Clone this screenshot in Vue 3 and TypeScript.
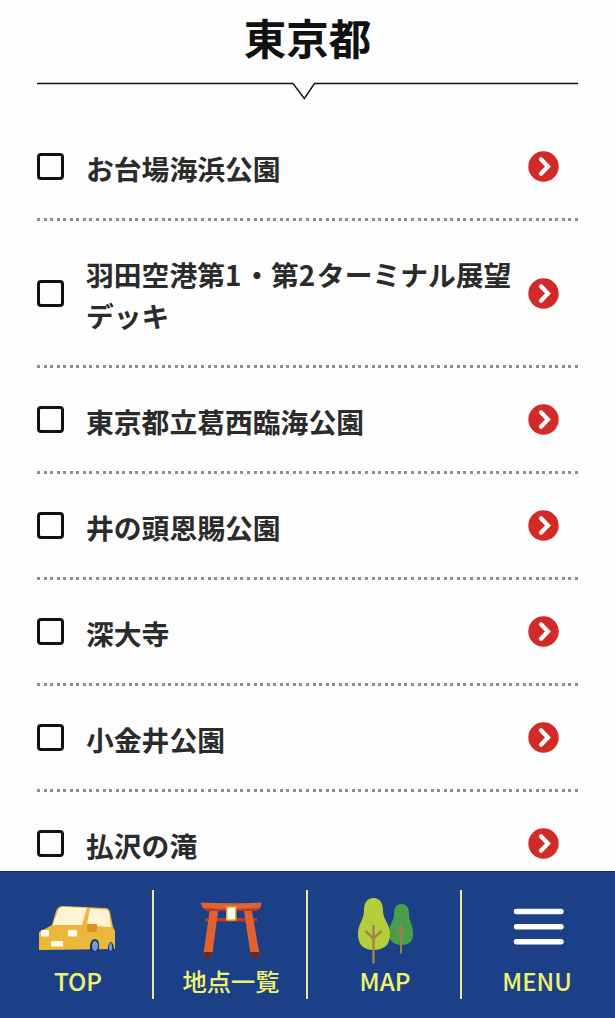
<script setup lang="ts">
import { ref } from 'vue'

interface Part {
  text: string
  digit?: boolean
}

interface Spot {
  id: number
  parts: Part[]
  checked: boolean
}

const spots = ref<Spot[]>([
  { id: 1, parts: [{ text: 'お台場海浜公園' }], checked: false },
  {
    id: 2,
    parts: [
      { text: '羽田空港第' },
      { text: '1', digit: true },
      { text: '・第' },
      { text: '2', digit: true },
      { text: 'ターミナル展望' },
      { text: 'デッキ' },
    ],
    checked: false,
  },
  { id: 3, parts: [{ text: '東京都立葛西臨海公園' }], checked: false },
  { id: 4, parts: [{ text: '井の頭恩賜公園' }], checked: false },
  { id: 5, parts: [{ text: '深大寺' }], checked: false },
  { id: 6, parts: [{ text: '小金井公園' }], checked: false },
  { id: 7, parts: [{ text: '払沢の滝' }], checked: false },
])
</script>

<template>
  <div class="page">
    <header class="heading">
      <h1>東京都</h1>
      <svg class="rule" viewBox="0 0 541 20" width="541" height="20">
        <path d="M0 3.5H256L267.300 18.500L277.500 3.500H541" fill="none" stroke="#111" stroke-width="1.4" />
      </svg>
    </header>

    <ul class="list">
      <li v-for="spot in spots" :key="spot.id" class="row">
        <button
          class="check"
          :class="{ on: spot.checked }"
          aria-label="選択"
          @click="spot.checked = !spot.checked"
        ></button>
        <span class="name"><span v-for="(part, i) in spot.parts" :key="i" :class="{ digit: part.digit }">{{ part.text }}</span></span>
        <svg class="arrow" viewBox="0 0 31 31" width="31" height="31">
          <circle cx="15.5" cy="15.5" r="15.2" fill="#d22b27" />
          <path d="M13 8.200L20 15.500L13 22.800" fill="none" stroke="#fff" stroke-width="4.200" stroke-linecap="round" stroke-linejoin="miter" />
        </svg>
      </li>
    </ul>

    <nav class="bar">
      <a class="item first">
        <svg class="icon" viewBox="0 0 80 70" width="80" height="70">
          <g transform="translate(0 -1)">
            <path d="M1 39L14 32L18 18Q20 13 25 13L67 15Q71 15 72 19L75 34L77 38L77 56L1 57Z" fill="#ebb83b" />
            <path d="M20 18Q21 14 26 14L49 15L44 32L14.500 32Z" fill="#fff3d5" />
            <path d="M52 15.500L67 16.500Q70 16.500 71 20L73 34L59 33L58 31L49 31Z" fill="#fff3d5" />
            <rect x="49" y="31" width="10" height="8" rx="1" fill="#dc9224" />
            <rect x="3" y="37" width="8" height="6.500" rx="1" fill="#fffbea" />
            <rect x="30" y="37" width="9" height="6.500" rx="1" fill="#fffbea" />
            <rect x="13" y="48" width="12" height="5.500" fill="#fffbea" />
            <path d="M52 58V52Q53 46 57 46Q61 46 61 52V58Z" fill="#183468" />
            <ellipse cx="57" cy="53" rx="3" ry="5" fill="#729be5" />
            <path d="M70 58V54Q71 49 73 49Q76 50 76 58Z" fill="#183468" />
            <ellipse cx="72.600" cy="54" rx="1.500" ry="4" fill="#729be5" />
          </g>
        </svg>
        <span class="label">TOP</span>
      </a>
      <a class="item">
        <svg class="icon" viewBox="0 0 80 70" width="80" height="70">
          <path d="M18.500 17H27L21 63H12Z" fill="#df6330" />
          <path d="M54 17H62L70 63H61Z" transform="translate(-1 0)" fill="#df6330" />
          <path d="M12 63L12.800 58H21.700L21 63ZM59 58H68L69 63H60Z" fill="#6d281a" />
          <rect x="14" y="24" width="52" height="3.500" fill="#b53b25" />
          <path d="M18 24H26L25.500 28H17ZM54 24H62L63 28H55Z" fill="#df6330" />
          <path d="M10 9Q40 12 70.500 9L69 15L65 17H16L12 15Z" fill="#b53b25" />
          <path d="M9.500 8.500Q40 10 70.500 8.500L69 14Q40 16 12 14Z" fill="#df6330" />
          <rect x="35.800" y="13" width="9" height="13" fill="#fffbea" stroke="#edaa43" stroke-width="1.400" />
        </svg>
        <span class="label jp">地点一覧</span>
      </a>
      <a class="item">
        <svg class="icon" viewBox="0 0 80 70" width="80" height="70">
          <g transform="translate(1 0)">
            <path d="M55.500 10C50 10 48 14 48 20C48 27 44 29 43 37C42 46 47 51 55.500 51C64 51 68 46 67 37C66 29 63 27 63 20C63 14 61 10 55.500 10Z" fill="#489e4b" />
            <path d="M27.500 4C21 4 18 9 18 16C18 27 12 29 12 40C12 51 18 56 27.500 56C38 56 44 51 44 40C44 29 37 27 37 16C37 9 34 4 27.500 4Z" fill="#b3ce3a" />
            <path d="M27.500 31V69.500M19.500 37L27.500 44.500L35.500 37" fill="none" stroke="#a48250" stroke-width="2.400" />
            <path d="M55 30V59.500M49.500 35L55 41L61 35" fill="none" stroke="#95834e" stroke-width="2" />
          </g>
        </svg>
        <span class="label">MAP</span>
      </a>
      <a class="item last">
        <svg class="icon" viewBox="0 0 80 70" width="80" height="70">
          <path d="M17.500 17.500H62M17.500 32.800H62M17.500 47.800H62" stroke="#fff" stroke-width="5.400" stroke-linecap="round" />
        </svg>
        <span class="label">MENU</span>
      </a>
    </nav>
  </div>
</template>

<style>
body {
  margin: 0;
  background: #fdfdfd;
}
</style>

<style scoped>
.page {
  display: flex;
  flex-direction: column;
  width: 615px;
  height: 1018px;
  overflow: hidden;
  background: #fdfdfd;
  font-family: "Noto Sans CJK JP", "Noto Sans", sans-serif;
}

.heading {
  flex: none;
  height: 115px;
  padding: 0 37px;
}

h1 {
  height: 80px;
  margin: 0;
  color: #111;
  font-size: 42.5px;
  font-weight: 700;
  line-height: 73px;
  text-align: center;
}

.rule {
  display: block;
}

.list {
  flex: 1;
  min-height: 0;
  margin: 0;
  padding: 0 37px;
  overflow: hidden;
  list-style: none;
}

.row {
  display: flex;
  align-items: center;
  box-sizing: border-box;
  padding: 31px 0 34px;
  background: repeating-linear-gradient(90deg, #8d8d8d 0 3px, transparent 3px 6.561px) left bottom / 100% 3px no-repeat;
}

.check {
  flex: none;
  box-sizing: border-box;
  width: 27px;
  height: 27px;
  padding: 0;
  border: 3px solid #111;
  border-radius: 4px;
  background: transparent;
}

.check.on {
  background: #d22b27;
}

.name {
  flex: none;
  width: 430px;
  margin: 2px 12px -2px 22px;
  color: #2b2b2b;
  font-size: 27.8px;
  font-weight: 700;
  line-height: 41px;
}

.digit {
  letter-spacing: 1.7px;
}

.arrow {
  flex: none;
}

.bar {
  display: grid;
  grid-template-columns: 154px 154px 154px 153px;
  flex: none;
  box-sizing: border-box;
  height: 147px;
  padding: 18px 0 19px;
  border-top: 1px solid #123069;
  background: #1b4088;
}

.item {
  display: flex;
  flex-direction: column;
  align-items: center;
  box-sizing: border-box;
  padding-left: 2px;
  border-right: 2px solid #e8ea98;
}

.first {
  padding-left: 4px;
}

.last {
  padding-left: 0;
  border-right: 0;
}

.icon {
  flex: none;
  margin-top: 4px;
}

.label {
  color: #f0f36f;
  font-size: 24.3px;
  font-weight: 500;
  line-height: 34px;
}

.last .label {
  margin-right: 3px;
  font-size: 24px;
}
</style>
